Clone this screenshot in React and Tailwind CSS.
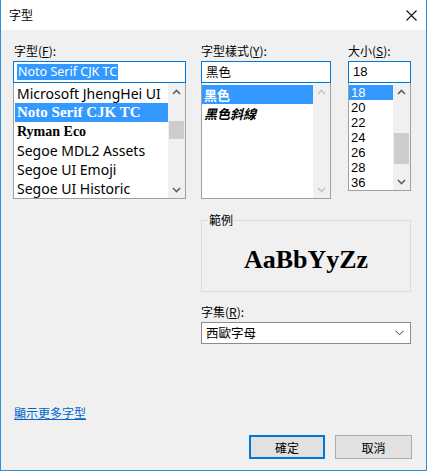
import React from "react";

const UI = { fontFamily: '"Noto Sans CJK TC", "Noto Sans", sans-serif' };
const LAT = { fontFamily: '"Noto Sans", "Noto Sans CJK TC", sans-serif' };
const NUM = { fontFamily: '"Liberation Sans", "Noto Sans", sans-serif' };
const SERIF = { fontFamily: '"Liberation Serif", serif' };

function Chev({ up, color }) {
  return (
    <svg width="9" height="6" viewBox="0 0 9 6">
      <polyline
        points={up ? "1,5 4.5,1.5 8,5" : "1,1 4.5,4.5 8,1"}
        fill="none"
        stroke={color}
        strokeWidth="1.6"
      />
    </svg>
  );
}

function ScrollBar({ gap, thumb, disabled }) {
  const c = disabled ? "#c4c4c4" : "#606060";
  return (
    <div className="w-[17px] h-full flex flex-col bg-[#f0f0f0]">
      <div className="h-[17px] flex items-center justify-center">
        <Chev up color={c} />
      </div>
      {thumb ? (
        <>
          <div style={{ height: gap }} />
          <div className="bg-[#cdcdcd] mx-[1px]" style={{ height: thumb }} />
        </>
      ) : null}
      <div className="flex-1" />
      <div className="h-[17px] flex items-center justify-center">
        <Chev color={c} />
      </div>
    </div>
  );
}

export default function App() {
  return (
    <div
      className="w-[427px] h-[471px] flex flex-col border-x border-b border-[#2b8fdc] bg-[#f0f0f0] text-black"
      style={UI}
    >
      {/* title bar */}
      <div className="h-[30px] bg-white flex items-center justify-between shrink-0">
        <span className="ml-[8px] text-[12px] leading-none">字型</span>
        <svg width="11" height="11" viewBox="0 0 11 11" className="mr-[9px]">
          <path d="M0.5 0.5 L10.5 10.5 M10.5 0.5 L0.5 10.5" stroke="#111" strokeWidth="1.1" />
        </svg>
      </div>

      {/* body */}
      <div className="flex-1 flex flex-col pl-[12px] pr-[14px] pt-[13px] pb-[11px]">
        <div className="flex">
          {/* font column */}
          <div className="w-[173px] flex flex-col">
            <div className="text-[12px] leading-[15px] mb-[3px] ml-[1px]">
              字型(<span className="underline">F</span>):
            </div>
            <div className="h-[22px] border border-[#0078d7] bg-white flex items-center px-[3px]">
              <span className="bg-[#3399ff] text-white text-[12.5px] leading-[16px] px-[1px]" style={LAT}>
                Noto Serif CJK TC
              </span>
            </div>
            <div className="h-[116px] border-x border-b border-[#a0a0a0] bg-white flex">
              <div className="flex-1 flex flex-col pt-[1px] pl-[1px] overflow-hidden">
                <div className="h-[19px] leading-[19px] px-[2px] text-[14px] whitespace-nowrap" style={LAT}>
                  Microsoft JhengHei UI
                </div>
                <div
                  className="h-[19px] leading-[19px] px-[2px] text-[15px] font-bold bg-[#3399ff] text-white whitespace-nowrap"
                  style={SERIF}
                >
                  Noto Serif CJK TC
                </div>
                <div className="h-[19px] leading-[19px] px-[2px] text-[14px] font-bold whitespace-nowrap" style={SERIF}>
                  Ryman Eco
                </div>
                <div className="h-[19px] leading-[19px] px-[2px] text-[14px] whitespace-nowrap" style={LAT}>
                  Segoe MDL2 Assets
                </div>
                <div className="h-[19px] leading-[19px] px-[2px] text-[14px] whitespace-nowrap" style={LAT}>
                  Segoe UI Emoji
                </div>
                <div className="h-[19px] leading-[19px] px-[2px] text-[14px] whitespace-nowrap" style={LAT}>
                  Segoe UI Historic
                </div>
              </div>
              <ScrollBar gap={21} thumb={18} />
            </div>
          </div>

          {/* style column */}
          <div className="w-[130px] ml-[15px] flex flex-col">
            <div className="text-[12px] leading-[15px] mb-[3px]">
              字型樣式(<span className="underline">Y</span>):
            </div>
            <div className="h-[22px] border border-[#0078d7] bg-white flex items-center px-[4px] text-[12.5px] leading-[16px]">
              黑色
            </div>
            <div className="h-[116px] border-x border-b border-[#a0a0a0] bg-white flex">
              <div className="flex-1 flex flex-col pt-[2px] overflow-hidden">
                <div className="h-[19px] leading-[19px] px-[2px] text-[13px] font-bold bg-[#3399ff] text-white">
                  黑色
                </div>
                <div className="h-[19px] leading-[19px] px-[2px] text-[13px] font-bold italic">
                  黑色斜線
                </div>
              </div>
              <ScrollBar disabled />
            </div>
          </div>

          {/* size column */}
          <div className="w-[63px] ml-[17px] flex flex-col">
            <div className="text-[12px] leading-[15px] mb-[3px]">
              大小(<span className="underline">S</span>):
            </div>
            <div className="h-[22px] border border-[#0078d7] bg-white flex items-center px-[4px] text-[13px] leading-[16px]" style={NUM}>
              18
            </div>
            <div className="h-[108px] border-x border-b border-[#a0a0a0] bg-white flex">
              <div className="flex-1 flex flex-col pt-[2px] overflow-hidden text-[13px]" style={NUM}>
                <div className="h-[15px] leading-[15px] px-[2px] bg-[#3399ff] text-white">18</div>
                <div className="h-[15px] leading-[15px] px-[2px]">20</div>
                <div className="h-[15px] leading-[15px] px-[2px]">22</div>
                <div className="h-[15px] leading-[15px] px-[2px]">24</div>
                <div className="h-[15px] leading-[15px] px-[2px]">26</div>
                <div className="h-[15px] leading-[15px] px-[2px]">28</div>
                <div className="h-[15px] leading-[15px] px-[2px]">36</div>
              </div>
              <ScrollBar gap={33} thumb={31} />
            </div>
          </div>
        </div>

        {/* sample + charset */}
        <div className="flex mt-[21px]">
          <div className="w-[173px] shrink-0" />
          <div className="w-[210px] ml-[15px] flex flex-col">
            <div className="relative h-[72px] border border-[#dcdcdc] flex items-center justify-center">
              <span className="absolute left-[6px] top-[-9px] px-[1px] bg-[#f0f0f0] text-[12px] leading-[15px]">
                範例
              </span>
              <span className="text-[26px] font-bold leading-none mt-[8px]" style={SERIF}>
                AaBbYyZz
              </span>
            </div>
            <div className="text-[12px] leading-[15px] mt-[12px] mb-[3px]">
              字集(<span className="underline">R</span>):
            </div>
            <div className="h-[22px] border border-[#8c8c8c] bg-white flex items-center justify-between pl-[4px] pr-[6px] text-[12.5px] leading-[16px]">
              <span>西歐字母</span>
              <svg width="9" height="6" viewBox="0 0 9 6">
                <polyline points="0.5,0.8 4.5,4.8 8.5,0.8" fill="none" stroke="#333" strokeWidth="1" />
              </svg>
            </div>
          </div>
        </div>

        <div className="flex-1" />

        <div className="ml-[1px] text-[12px] leading-[15px]">
          <span className="text-[#0066cc] underline">顯示更多字型</span>
        </div>

        <div className="flex justify-end gap-[10px] mt-[15px]">
          <div className="w-[76px] h-[24px] border-2 border-[#0078d7] bg-[#e1e1e1] flex items-center justify-center text-[12px] leading-[15px]">
            確定
          </div>
          <div className="w-[77px] h-[24px] border border-[#adadad] bg-[#e1e1e1] flex items-center justify-center text-[12px] leading-[15px]">
            取消
          </div>
        </div>
      </div>
    </div>
  );
}
